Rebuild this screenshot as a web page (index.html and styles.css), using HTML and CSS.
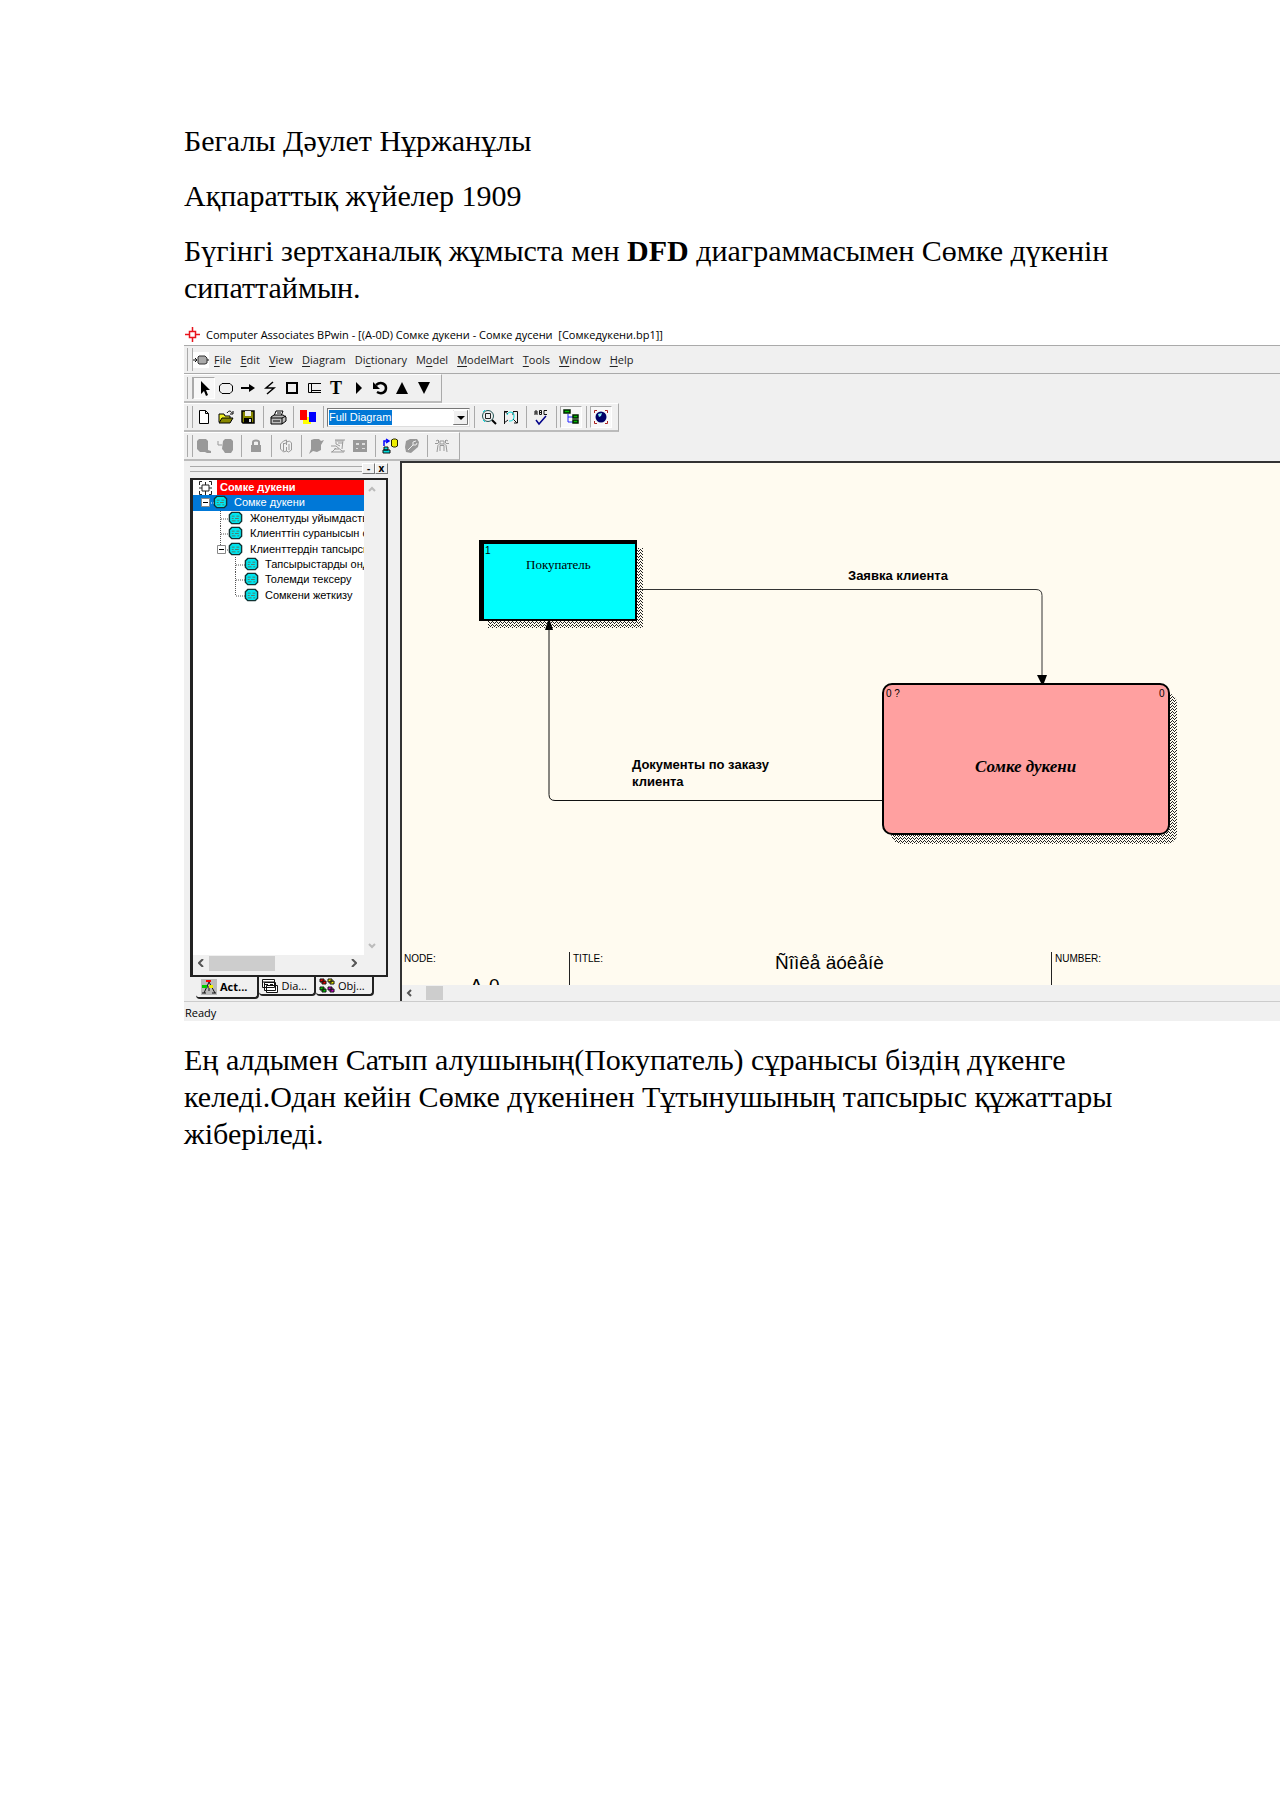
FILE: index.html
```html
<!DOCTYPE html>
<html lang="kk">
<head>
<meta charset="utf-8">
<title>Бегалы Дәулет Нұржанұлы</title>
<link rel="stylesheet" href="styles.css">
</head>
<body>
<svg class="defs" aria-hidden="true">
  <defs>
    <symbol id="node" viewBox="0 0 16 16"><path d="M4 1.500h8l2.500 2.500v7l-2.500 2.500H4L1.500 11V4z" fill="#00e5ee" stroke="#133" stroke-width="1.500"/><path d="M4 5.500h3M9 5.500h3M4 8h2M7.500 8h4M4 10.500h4M10 10.500h2" stroke="#576" fill="none"/></symbol>
    <symbol id="minus" viewBox="0 0 9 9"><path d="M.5.5h8v8h-8z" fill="#fff" stroke="#888"/><path d="M2 4.500h5" stroke="#000"/></symbol>
    <pattern id="hatch" width="4" height="3" patternUnits="userSpaceOnUse"><path d="M0 0h1v1H0zM1 1h1v1H1zM2 2h1v1H2zM3 1h1v1H3z" fill="#222"/></pattern>
  </defs>
</svg>
<main class="document">
  <p>Бегалы Дәулет Нұржанұлы</p>
  <p>Ақпараттық жүйелер 1909</p>
  <p>Бүгінгі зертханалық жұмыста мен <b>DFD</b> диаграммасымен Сөмке дүкенін сипаттаймын.</p>

  <section class="window" aria-label="BPwin">
    <header class="titlebar">
      <svg width="15" height="15" viewBox="0 0 15 15" fill="none" stroke="#e8141c" stroke-width="1.500"><path d="M4.500 4.500h6v6h-6zM7.500 0v4M7.500 11v4M0 7.500h4M11 7.500h4"/></svg>
      <span>Computer Associates BPwin - [(A-0D) Сомке дукени - Сомке дусени &nbsp;[Сомкедукени.bp1]]</span>
    </header>

    <nav class="menubar">
      <span class="grip"></span>
      <svg class="menu-icon" width="16" height="16" viewBox="0 0 16 16"><path d="M0 0h16v16H0z" fill="#fff"/><path d="M6 4h6l2 2v5l-2 1H6L5 11V5z" fill="#aaa" stroke="#333"/><path d="M0 8h4M14 8h2M2 6l2 2-2 2" stroke="#111" fill="none"/></svg>
      <button><u>F</u>ile</button><button><u>E</u>dit</button><button><u>V</u>iew</button><button><u>D</u>iagram</button><button>Di<u>c</u>tionary</button><button>M<u>o</u>del</button><button><u>M</u>odelMart</button><button><u>T</u>ools</button><button><u>W</u>indow</button><button><u>H</u>elp</button>
    </nav>

    <div class="toolbar">
      <span class="grip"></span>
      <button class="tool pressed" aria-label="Pointer"><svg viewBox="0 0 18 18"><path d="M6 2v13l3-3 2 5 2-1-2-5h4z"/></svg></button>
      <button class="tool" aria-label="Activity"><svg viewBox="0 0 18 18" fill="none" stroke="#000"><path d="M5 4.500h8l2.500 2.500v5l-2.500 2.500H5L2.500 12V7z"/></svg></button>
      <button class="tool" aria-label="Arrow"><svg viewBox="0 0 18 18"><path d="M2 8h8V5l6 4-6 4v-3H2z"/></svg></button>
      <button class="tool" aria-label="Squiggle"><svg viewBox="0 0 18 18" fill="none" stroke="#000" stroke-width="1.500"><path d="M12 3L5 9h8l-7 6"/></svg></button>
      <button class="tool" aria-label="External"><svg viewBox="0 0 18 18" fill="none" stroke="#000" stroke-width="2"><path d="M4 4h10v10H4z"/></svg></button>
      <button class="tool" aria-label="Data store"><svg viewBox="0 0 18 18" fill="none" stroke="#000"><path d="M16 4.500H3.500v9H16M6.500 4v9M7 11.500h9"/></svg></button>
      <button class="tool letter">T</button>
      <button class="tool" aria-label="Next"><svg viewBox="0 0 18 18"><path d="M7 3l6 6-6 6z"/></svg></button>
      <button class="tool" aria-label="Undo"><svg viewBox="0 0 18 18"><path d="M5 6c5-4 10-1 10 3s-4 7-9 4" fill="none" stroke="#000" stroke-width="2.500"/><path d="M2 3v7h7z"/></svg></button>
      <button class="tool" aria-label="Up"><svg viewBox="0 0 18 18"><path d="M9 3l6 12H3z"/></svg></button>
      <button class="tool" aria-label="Down"><svg viewBox="0 0 18 18"><path d="M9 15L3 3h12z"/></svg></button>
    </div>

    <div class="toolbar">
      <span class="grip"></span>
      <button class="tool" aria-label="New"><svg viewBox="0 0 18 18"><path d="M4.500 2.500h6l3 3v10h-9zM10.500 2.500v3h3" fill="#fff" stroke="#000"/></svg></button>
      <button class="tool" aria-label="Open"><svg viewBox="0 0 18 18"><path d="M2 14V6h5l1 2h5v2" fill="#ee2" stroke="#000"/><path d="M2 15l3-5h11l-3 5z" fill="#880" stroke="#000"/><path d="M10 5c2-3 4-2 5 0M16 3v3h-3" fill="none" stroke="#000"/></svg></button>
      <button class="tool" aria-label="Save"><svg viewBox="0 0 18 18"><path d="M3 3h12v12H4l-1-1z" fill="#880" stroke="#000" stroke-width="1.500"/><path d="M6 3h6v5H6z" fill="#eee"/><path d="M5 10h8v5H5z"/><path d="M10 11h2v3h-2z" fill="#ddd"/></svg></button>
      <span class="sep"></span>
      <button class="tool" aria-label="Print"><svg viewBox="0 0 18 18" fill="#fff" stroke="#000"><path d="M5 8l2-5h7l-2 5"/><path d="M2 9l3-2h9l3 2v4l-4 3H2z" fill="#bbb"/><path d="M2 10h11v6M13 10l4-2M4 13h7M8 5h4" fill="none"/></svg></button>
      <span class="sep"></span>
      <button class="tool" aria-label="Colors"><svg viewBox="0 0 18 18"><path d="M4 9h8v7H4z" fill="#ff0"/><path d="M10 4h7v10h-7z" fill="#00f"/><path d="M1 2h7v10H1z" fill="red"/></svg></button>
      <span class="sep"></span>
      <span class="combo"><select aria-label="Zoom"><option>Full Diagram</option></select><svg width="15" height="15" viewBox="0 0 15 15"><path d="M.5.5h14v14H.5z" fill="#f0f0f0" stroke="#777"/><path d="M.5 14V.5H14" stroke="#fff" fill="none"/><path d="M4 6h8l-4 4z"/></svg></span>
      <span class="sep"></span>
      <button class="tool" aria-label="Zoom in"><svg viewBox="0 0 18 18" fill="none" stroke="#000"><circle cx="8" cy="8" r="5.500" stroke="#255"/><path d="M5.500 5.500h5v5h-5z" stroke="#222"/><path d="M12 12l4 4" stroke-width="2"/><path d="M3 4l2-2M3 12l2 2" stroke="#0dd"/></svg></button>
      <button class="tool" aria-label="Fit"><svg viewBox="0 0 18 18" fill="none" stroke="#111"><path d="M2.500 16V3.500H6M11 3.500h4.500V15H12M2 3l4 3M15 15l-4-4M2 15l4-3M11 4v3"/><path d="M5 7c1-4 7-4 7 1s-3 5-5 5" stroke="#0dd"/></svg></button>
      <span class="sep"></span>
      <button class="tool" aria-label="Spelling"><svg viewBox="0 0 18 18"><path d="M3 7V3h2v4M3 5h2M7.500 2.500v4h2v-4zM7.500 4.500h2M15 2.500h-3v4h3" fill="none" stroke="#111"/><path d="M4 12l3 4 7-8" fill="none" stroke="#008" stroke-width="1.500"/></svg></button>
      <span class="sep"></span>
      <button class="tool pressed" aria-label="Model explorer"><svg viewBox="0 0 18 18"><path d="M6 6v8h5M6 9h5" fill="none" stroke="#22f"/><path d="M2 2h6v3H2zM11 7h5v3h-5zM11 12h5v3h-5z" fill="#0b0" stroke="#020" stroke-width="1.500"/></svg></button>
      <span class="sep"></span>
      <button class="tool pressed" aria-label="ModelMart"><svg viewBox="0 0 18 18"><circle cx="9" cy="9" r="5.500" fill="#006"/><path d="M6 6l4-1-1 3-2 1z" fill="#8ee"/><path d="M2.500 5V2.500H5M13 2.500h2.500V5M2.500 13v2.500H5M13 15.500h2.500V13" fill="none" stroke="#a22"/></svg></button>
    </div>

    <div class="toolbar disabled">
      <span class="grip"></span>
      <button class="tool" aria-label="Model open"><svg viewBox="0 0 18 18"><path d="M2 4l2-2h7l2 2v9l3 1v2h-4l-2-1H5l-3-3z"/></svg></button>
      <button class="tool" aria-label="Model save"><svg viewBox="0 0 18 18"><path d="M6 4l2-2h6l2 2v9l-2 3H8l-2-3-1-1z"/><path d="M1 4v4h4" fill="none" stroke="#999"/></svg></button>
      <span class="sep"></span>
      <button class="tool" aria-label="Lock"><svg viewBox="0 0 18 18"><path d="M4 8h10v7H4z"/><path d="M6 8V5c0-2 6-2 6 0v3" fill="none" stroke="#999" stroke-width="2"/></svg></button>
      <span class="sep"></span>
      <button class="tool hollow" aria-label="Library"><svg viewBox="0 0 18 18"><path d="M3.500 7l3-3 3-1v2l3-1 2 2v7l-3 2-2-1-3 1-3-3zM6.500 6v8M9.500 5v3M9.500 10v4M12 7v6M6 7l3-1"/></svg></button>
      <span class="sep"></span>
      <button class="tool" aria-label="Merge"><svg viewBox="0 0 18 18"><path d="M4 3l3-1h5l2 2 3-1-3 5v5l-4 2-4-1-4 3 2-5z"/></svg></button>
      <button class="tool hollow" aria-label="Review"><svg viewBox="0 0 18 18"><path d="M6 3h10M7 3v4l4 2M14 3l-1 9M9 6h5M2 9h5l6 5h3M2 15h13M3 15l4-4M5 12h5M8 4h5"/></svg></button>
      <button class="tool" aria-label="Grid"><svg viewBox="0 0 18 18"><path d="M2 3h14v12H2z"/><path d="M5 6h3v2H5zM11 6h3v2h-3zM5 11h2v1H5zM11 11h3v1h-3z" fill="#ddd"/></svg></button>
      <span class="sep"></span>
      <button class="tool" aria-label="Sync"><svg viewBox="0 0 18 18"><path d="M3 9V4h4M5 2l3 2-3 2" fill="none" stroke="#00f" stroke-width="1.500"/><path d="M10.500 3l2-1h2l2 1v6l-2 1h-2l-2-1z" fill="#ee0" stroke="#220"/><path d="M3 10h4v3H3zM2 13h7v3H2z" fill="#0dd" stroke="#111"/></svg></button>
      <button class="tool" aria-label="Tools"><svg viewBox="0 0 18 18"><path d="M3 4l4-2h7l2 3-1 5-7 6-5-1-1-5z"/><path d="M5 13l5-5m0 0V5l3-1m-3 4h3l1-2" fill="none" stroke="#eee"/></svg></button>
      <span class="sep"></span>
      <button class="tool hollow" aria-label="Users"><svg viewBox="0 0 18 18"><path d="M2 6.500h3l2 2h4l2-2h3M5.500 3v3M12.500 3v3M5 8l-1 7M13 8l1 7M7 9v5M11 9v5M7 4h4v3H7zM3 4l2-1M15 4l-2-1"/></svg></button>
    </div>

    <div class="workspace">
      <aside class="explorer">
        <div class="dock"><i></i><button aria-label="Collapse">-</button><button aria-label="Close">x</button></div>
        <div class="treebox">
          <ul class="tree">
            <li class="model"><svg width="24" height="16" viewBox="0 0 24 16"><path d="M0 0h24v16H0z" fill="#fff"/><path d="M9 5h7v6H9zM12.500 2v3M12.500 11v5M6 8h3M16 8h3M9 1.500H6.500V5M16 1.500h2.500V5M9 14.500H6.500V11M16 14.500h2.500V11" fill="none" stroke="#222"/></svg><span>Сомке дукени</span></li>
            <li class="selected"><svg width="41" height="16"><path d="M12 8h10" stroke="#fff" stroke-dasharray="1 1"/><use href="#minus" x="8" y="3" width="9" height="9"/><use href="#node" x="20" y="0" width="15" height="15"/></svg><span>Сомке дукени</span></li>
            <li><svg width="57" height="16"><path d="M27.500 0v16M28 8h10" stroke="#555" stroke-dasharray="1 1"/><use href="#node" x="35" y="0" width="15" height="15"/></svg><span>Жонелтуды уйымдасты</span></li>
            <li><svg width="57" height="16"><path d="M27.500 0v16M28 8h10" stroke="#555" stroke-dasharray="1 1"/><use href="#node" x="35" y="0" width="15" height="15"/></svg><span>Клиенттін суранысын о</span></li>
            <li><svg width="57" height="16"><path d="M27.500 0v8M28 8h10" stroke="#555" stroke-dasharray="1 1"/><use href="#minus" x="24" y="3" width="9" height="9"/><use href="#node" x="35" y="0" width="15" height="15"/></svg><span>Клиенттердін тапсырсы</span></li>
            <li><svg width="72" height="16"><path d="M42.500 0v16M43 8h10" stroke="#555" stroke-dasharray="1 1"/><use href="#node" x="51" y="0" width="15" height="15"/></svg><span>Тапсырыстарды онд</span></li>
            <li><svg width="72" height="16"><path d="M42.500 0v16M43 8h10" stroke="#555" stroke-dasharray="1 1"/><use href="#node" x="51" y="0" width="15" height="15"/></svg><span>Толемди тексеру</span></li>
            <li><svg width="72" height="16"><path d="M42.500 0v8M43 8h10" stroke="#555" stroke-dasharray="1 1"/><use href="#node" x="51" y="0" width="15" height="15"/></svg><span>Сомкени жеткизу</span></li>
          </ul>
          <div class="vscroll"><svg width="8" height="6" viewBox="0 0 8 6"><path d="M1 5l3-3 3 3"/></svg><svg width="8" height="6" viewBox="0 0 8 6"><path d="M1 1l3 3 3-3"/></svg></div>
          <div class="hscroll"><svg width="6" height="8" viewBox="0 0 6 8"><path d="M5 0L1 4l4 4"/></svg><span class="thumb"></span><svg width="6" height="8" viewBox="0 0 6 8"><path d="M1 0l4 4-4 4"/></svg></div>
        </div>
        <div class="tabs">
          <button class="tab active"><svg width="16" height="16" viewBox="0 0 16 16"><path d="M0 0h16v16H0z" fill="#bbb"/><path d="M8 3L3 14M8 3l6 11M1 14h4M11 14h4M4 8h8M8 9v3" stroke="#111" fill="none"/><path d="M5 1h5v2H5z" fill="red"/><path d="M1 6h5v3H1z" fill="#0c0"/><path d="M8 6h4v3H8z" fill="#ee0"/></svg>Act...</button>
          <button class="tab"><svg width="16" height="16" viewBox="0 0 16 16"><path d="M4.500 7.500h11v7h-11zM2.500 4.500h11v8h-11zM.5 1.500h12v8H.5zM1 4h11" fill="#fff" stroke="#111"/><path d="M3 6.500h3M8 6.500h3" stroke="#111"/></svg>Dia...</button>
          <button class="tab"><svg width="16" height="16" viewBox="0 0 16 16" stroke="#111"><path d="M1 1h4v3H1zM3 3h4v3H3z" fill="red"/><path d="M9 1h4v3H9zM11 3h4v3h-4z" fill="#ee0"/><path d="M1 9h4v3H1zM3 11h4v3H3z" fill="#0c0"/><path d="M9 9h4v3H9zM11 11h4v3h-4z" fill="#c0c"/></svg>Obj...</button>
        </div>
      </aside>

      <div class="view">
        <div class="canvas">
          <svg class="diagram" width="878" height="489" viewBox="402 463 878 489">
            <path d="M488 548h155v80H488z" fill="url(#hatch)"/>
            <path d="M479 540h158v81H479z"/>
            <path d="M484 544h151v75H484z" fill="#0ff"/>
            <rect x="891" y="693" width="286" height="151" rx="10" fill="url(#hatch)"/>
            <rect x="883" y="684" width="286" height="150" rx="9" fill="#ffa0a0" stroke="#000" stroke-width="2"/>
            <path d="M637 589.500h399q6 0 6 6V676" fill="none" stroke="#333"/>
            <path d="M882 800.500H555q-6 0-6-6V628" fill="none" stroke="#111"/>
            <path d="M1037 675h10l-3 8h-3zM545 630h8l-3-9h-2z"/>
            <text class="num" x="485" y="554">1</text>
            <text class="entity" x="526" y="569">Покупатель</text>
            <text class="flow" x="848" y="580">Заявка клиента</text>
            <text class="flow" x="632" y="769">Документы по заказу</text>
            <text class="flow" x="632" y="786">клиента</text>
            <text class="num" x="886" y="697">0 ?</text>
            <text class="num" x="1159" y="697">0</text>
            <text class="process" x="975" y="772">Сомке дукени</text>
          </svg>
          <div class="frame">
            <div class="cell node">NODE:<strong>A-0</strong></div>
            <div class="cell title">TITLE:<strong>Ñîìêå äóêåíè</strong></div>
            <div class="cell">NUMBER:</div>
          </div>
        </div>
        <div class="viewscroll"><svg width="6" height="8" viewBox="0 0 6 8"><path d="M5 1L2 4l3 3"/></svg><span class="thumb"></span></div>
      </div>
    </div>
    <footer class="status">Ready</footer>
  </section>

  <p>Ең алдымен Сатып алушының(Покупатель) сұранысы біздің дүкенге келеді.Одан кейін Сөмке дүкенінен Тұтынушының тапсырыс құжаттары жіберіледі.</p>
</main>
</body>
</html>
```
FILE: styles.css
```css
* { box-sizing: border-box; }
body { margin: 0; background: #fff; color: #000; font-family: "Liberation Serif", serif; }
.defs { position: absolute; width: 0; height: 0; }
.document { min-height: 100vh; padding: 122px 0 0 184px; overflow: hidden; }
.document p { margin: 0 144px 18px 0; font-size: 30px; line-height: 37px; }

.window { margin-bottom: 20px; background: #f0f0f0; font-family: "Open Sans", sans-serif; font-size: 11px; line-height: 16px; }
.window button { margin: 0; padding: 0; border: 0; background: none; color: inherit; font: inherit; }
.window svg { flex: none; display: block; }
.titlebar { display: flex; align-items: center; gap: 6px; height: 22px; padding-left: 1px; background: #fff; border-bottom: 1px solid #aaa; white-space: nowrap; }
.menubar { display: flex; align-items: center; height: 28px; border-bottom: 1px solid #aaa; gap: 9px; }
.menubar .grip { margin-right: -9px; }
.menu-icon { margin-right: -4px; }
.menubar button { color: #222; }
u { text-underline-offset: 2px; }

.grip { flex: none; align-self: stretch; width: 9px; margin: 2px 0; border-right: 1px solid #aaa; background: linear-gradient(#aaa, #aaa) 3px 0 / 1px 100% no-repeat; }
.toolbar { display: flex; align-items: center; width: fit-content; height: 29px; padding-right: 6px; border-right: 1px solid #aaa; border-bottom: 2px solid #bbb; border-top: 1px solid #fff; }
.window .tool { flex: none; display: flex; align-items: center; justify-content: center; width: 22px; height: 22px; }
.tool svg { width: 18px; height: 18px; }
.window .tool.pressed { background: #f8f8f8; border: 1px solid; border-color: #aaa #fff #fff #aaa; }
.window .tool.letter { font: bold 18px "Liberation Serif", serif; }
.toolbar.disabled svg { fill: #999; }
.toolbar.disabled .hollow svg { fill: none; stroke: #999; }
.sep { flex: none; width: 1px; height: 22px; margin: 0 3px 0 4px; background: #aaa; }
.combo { display: flex; align-items: center; width: 143px; height: 19px; padding: 1px; background: #fff; border: 1px solid; border-color: #777 #ddd #ddd #777; }
.combo select { flex: 1; height: 15px; padding: 0; border: 0; border-radius: 0; appearance: none; color: #fff; font: 11px/14px "Liberation Sans", sans-serif; background: linear-gradient(#0078d7, #0078d7) 0 0 / 63px 100% no-repeat; }

.workspace { display: flex; height: 541px; border-bottom: 1px solid #ccc; }
.explorer { flex: none; display: flex; flex-direction: column; width: 216px; padding: 0 12px 2px 6px; }
.dock { display: flex; align-items: center; height: 17px; padding-bottom: 2px; }
.dock i { flex: 1; height: 6px; border: solid #aaa; border-width: 1px 0; }
.window .dock button { width: 13px; height: 11px; border: 1px solid; border-color: #fff #777 #777 #fff; font-size: 10px; font-weight: bold; line-height: 7px; }
.treebox { flex: 1; min-height: 0; display: grid; grid-template: 1fr 20px / 1fr 22px; background: #f0f0f0; border: solid #222; border-width: 2px 2px 2px 3px; }
.tree { display: grid; grid-template-rows: repeat(8, 1fr); height: 100%; margin: 0; padding: 0 0 352px; list-style: none; background: #fff; overflow: hidden; font: 11px/15px "Liberation Sans", sans-serif; }
.tree li { display: flex; min-height: 0; overflow: hidden; white-space: nowrap; }
.tree .model { background: red; color: #fff; font-weight: bold; }
.tree .model span { padding-left: 3px; }
.tree .selected { background: #0078d7; color: #fff; }
.vscroll { display: flex; flex-direction: column; align-items: center; justify-content: space-between; padding: 6px 6px 6px 0; }
.hscroll { display: flex; align-items: center; padding: 0 7px 4px 5px; }
.hscroll .thumb { width: 66px; height: 15px; margin: 0 auto 0 5px; }
.thumb { background: #cdcdcd; }
.vscroll svg, .hscroll svg, .viewscroll svg { fill: none; stroke: #555; stroke-width: 2; }
.vscroll svg { stroke: #bbb; }
.tabs { display: flex; align-items: flex-start; height: 22px; padding-left: 6px; }
.window .tab { display: flex; align-items: center; gap: 3px; height: 19px; padding: 0 7px 0 3px; border: solid #222; border-width: 0 2px 2px 0; border-radius: 0 0 4px 4px; white-space: nowrap; }
.window .tab.active { height: 22px; padding: 0 10px 0 5px; font-weight: bold; }

.view { flex: 1; min-width: 0; display: flex; flex-direction: column; border-left: 2px solid #333; border-top: 2px solid #333; }
.canvas { flex: 1; display: flex; flex-direction: column; min-height: 0; overflow: hidden; background: #fffbf0; }
.num { font: 10px "Liberation Sans", sans-serif; }
.entity { font: 13px "Liberation Serif", serif; }
.flow { font: bold 13px "Liberation Sans", sans-serif; }
.process { font: italic bold 17px "Liberation Serif", serif; }
.frame { flex: 1; min-height: 0; display: flex; overflow: hidden; font: 10px/14px "Liberation Sans", sans-serif; }
.cell { flex: 1; padding-left: 3px; border-left: 1px solid #222; }
.cell.node { flex: 0 0 167px; padding-left: 2px; border: 0; }
.cell.title { flex: 0 0 482px; display: flex; }
.cell strong { font-size: 19px; line-height: 22px; font-weight: normal; }
.node strong { display: block; padding: 9px 0 0 66px; }
.title strong { flex: 1; padding: 0 0 0 172px; }
.viewscroll { display: flex; align-items: center; height: 16px; padding-left: 4px; }
.viewscroll .thumb { width: 17px; height: 14px; margin-left: 14px; }
.status { height: 19px; padding: 3px 0 0 1px; }
```
